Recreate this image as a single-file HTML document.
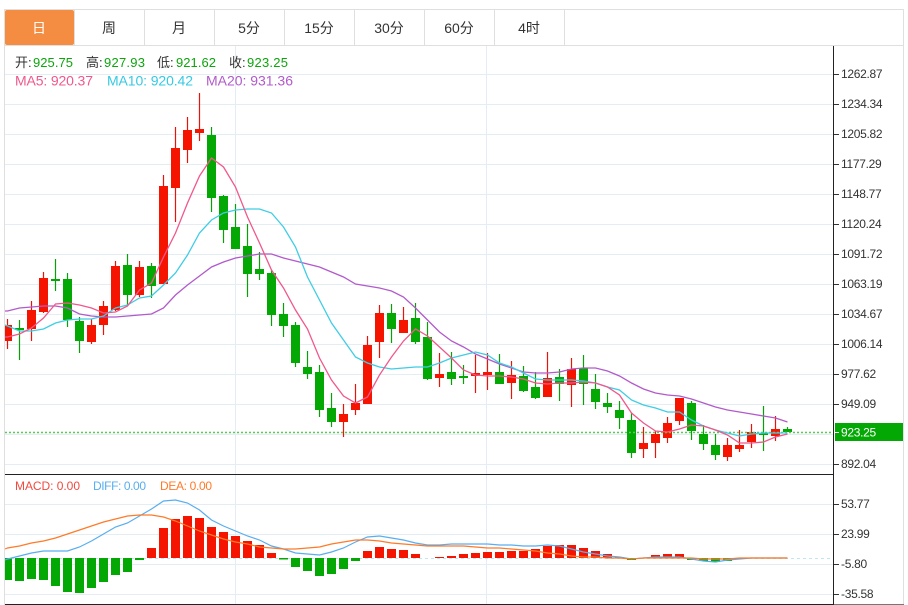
<!DOCTYPE html>
<html>
<head>
<meta charset="utf-8">
<style>
html,body{margin:0;padding:0;background:#fff;width:908px;height:605px;overflow:hidden}
svg{display:block;position:absolute;left:0;top:0}
text{font-family:"Liberation Sans","Noto Sans CJK SC",sans-serif}
.tab{font-size:14px;fill:#333;text-anchor:middle}
.ax{font-size:12px;fill:#333;letter-spacing:-.3px}
.i{font-size:13px}
.m{font-size:12px}
</style>
</head>
<body>
<svg width="908" height="605" viewBox="0 0 908 605" xmlns="http://www.w3.org/2000/svg">
<defs><clipPath id="c"><rect x="5" y="46" width="829" height="559"/></clipPath></defs>

<!-- frame -->
<path d="M4.500 605V9.500H903.500V605M5 45.500H904M74.500 10V45M144.500 10V45M214.500 10V45M284.500 10V45M354.500 10V45M424.500 10V45M494.500 10V45M564.500 10V45" fill="none" stroke="#dfdfdf"/>
<rect x="5" y="10" width="69" height="35" rx="2" fill="#f48d42"/>

<!-- tabs -->
<text class="tab" x="39" y="33" style="fill:#fff">日</text>
<text class="tab" x="109" y="33">周</text>
<text class="tab" x="179" y="33">月</text>
<text class="tab" x="249" y="33">5分</text>
<text class="tab" x="319" y="33">15分</text>
<text class="tab" x="389" y="33">30分</text>
<text class="tab" x="459" y="33">60分</text>
<text class="tab" x="529" y="33">4时</text>

<!-- grid -->
<path d="M5 74.500H834M5 104.500H834M5 134.500H834M5 164.500H834M5 194.500H834M5 224.500H834M5 254.500H834M5 284.500H834M5 314.500H834M5 344.500H834M5 374.500H834M5 404.500H834M5 434.500H834M5 464.500H834M5 504.500H834M5 534.500H834M5 564.500H834M5 594.500H834M235.500 46V604M486.500 46V604" fill="none" stroke="#e4edf4"/>

<g clip-path="url(#c)">
<!-- green wicks -->
<path d="M19.500 320V360M55.500 259V291M67.500 273V327M79.500 317V353M127.500 254V305M151.500 263V298M211.500 127V212M223.500 195V243M235.500 204V249M247.500 224V297M259.500 252V280M271.500 270V326M283.500 303V337M295.500 322V367M307.500 351V379M319.500 365V417M331.500 393V427M391.500 304V343M415.500 303V344M427.500 322V380M451.500 352V385M463.500 365V384M499.500 354V384M523.500 366V392M535.500 372V399M559.500 369V401M583.500 355V405M595.500 374V409M607.500 393V413M619.500 401V429M631.500 413V458M691.500 401V440M703.500 425V450M715.500 434V460M763.500 406V451M787.500 427V432" stroke="#0a9f0a" stroke-width="1.200" fill="none"/>
<!-- red wicks -->
<path d="M7.500 319V349M31.500 301V341M43.500 272V313M91.500 319V344M103.500 301V335M115.500 261V311M139.500 261V297M163.500 175V284M175.500 127V222M187.500 117V163M199.500 93V141M343.500 404V437M355.500 384V415M367.500 336V404M379.500 305V358M403.500 307V333M439.500 353V387M475.500 355V393M487.500 353V390M511.500 361V399M547.500 352V397M571.500 358V407M643.500 427V458M655.500 431V458M667.500 417V443M679.500 398V425M727.500 438V461M739.500 430V452M751.500 424V448M775.500 416V441" stroke="#e8140a" stroke-width="1.200" fill="none"/>
<!-- green bodies -->
<path fill="#04a804" d="M15 328h9V330h-9zM51 279h9V281h-9zM63 279h9V320h-9zM75 321h9V341h-9zM123 265h9V295h-9zM147 266h9V286h-9zM207 135h9V198h-9zM219 196h9V230h-9zM231 227h9V249h-9zM243 246h9V274h-9zM255 269h9V274h-9zM267 273h9V315h-9zM279 314h9V326h-9zM291 325h9V363h-9zM303 367h9V374h-9zM315 372h9V410h-9zM327 408h9V422h-9zM387 313h9V329h-9zM411 318h9V342h-9zM423 337h9V379h-9zM447 372h9V379h-9zM459 376h9V378h-9zM495 372h9V384h-9zM519 376h9V391h-9zM531 387h9V398h-9zM555 377h9V384h-9zM579 368h9V384h-9zM591 389h9V402h-9zM603 403h9V407h-9zM615 410h9V418h-9zM627 420h9V453h-9zM687 403h9V431h-9zM699 434h9V444h-9zM711 445h9V455h-9zM759 433h9V435h-9zM783 429h9V432h-9z"/>
<!-- red bodies -->
<path fill="#f41400" d="M3 325h9V341h-9zM27 310h9V329h-9zM39 278h9V312h-9zM87 325h9V342h-9zM99 306h9V325h-9zM111 266h9V310h-9zM135 267h9V295h-9zM159 186h9V284h-9zM171 148h9V188h-9zM183 130h9V150h-9zM195 129h9V133h-9zM339 414h9V422h-9zM351 403h9V410h-9zM363 345h9V404h-9zM375 313h9V342h-9zM399 320h9V333h-9zM435 374h9V378h-9zM471 373h9V376h-9zM483 372h9V375h-9zM507 375h9V383h-9zM543 378h9V397h-9zM567 369h9V385h-9zM639 443h9V449h-9zM651 434h9V443h-9zM663 423h9V438h-9zM675 398h9V421h-9zM723 445h9V457h-9zM735 445h9V449h-9zM747 432h9V442h-9zM771 429h9V436h-9z"/>

<!-- last price dotted -->
<path d="M5 432.500H834" stroke="#55cc55" stroke-width="1.400" stroke-dasharray="2 2" fill="none"/>

<!-- MA20 -->
<path fill="none" stroke="#b25acb" stroke-width="1.300" d="M5 311L7.500 311 19.500 308 31.500 307 43.500 306 55.500 306 67.500 308 79.500 314 91.500 316 103.500 317 115.500 317 127.500 316 139.500 315 151.500 314 163.500 308 175.500 295 187.500 285 199.500 276 211.500 267 223.500 262 235.500 258 247.500 256 259.500 254 271.500 254 283.500 258 295.500 261 307.500 264 319.500 267 331.500 272 343.500 277 355.500 284 367.500 286 379.500 288 391.500 291 403.500 297 415.500 308 427.500 320 439.500 332 451.500 341 463.500 347 475.500 354 487.500 359 499.500 364 511.500 368 523.500 372 535.500 373 547.500 373 559.500 372 571.500 369 583.500 368 595.500 368 607.500 371 619.500 376 631.500 383 643.500 389 655.500 393 667.500 395 679.500 396 691.500 399 703.500 403 715.500 407 727.500 410 739.500 412 751.500 414 763.500 416 775.500 418 787.500 422"/>
<!-- MA10 -->
<path fill="none" stroke="#3fcde4" stroke-width="1.300" d="M5 325L7.500 326 19.500 331 31.500 331 43.500 329 55.500 323 67.500 320 79.500 319 91.500 319 103.500 316 115.500 308 127.500 305 139.500 298 151.500 296 163.500 285 175.500 273 187.500 255 199.500 233 211.500 220 223.500 213 235.500 210 247.500 209 259.500 209 271.500 213 283.500 227 295.500 247 307.500 277 319.500 300 331.500 323 343.500 340 355.500 357 367.500 363 379.500 367 391.500 369 403.500 368 415.500 367 427.500 367 439.500 363 451.500 358 463.500 355 475.500 352 487.500 355 499.500 363 511.500 367 523.500 373 535.500 379 547.500 380 559.500 380 571.500 380 583.500 381 595.500 383 607.500 387 619.500 390 631.500 400 643.500 405 655.500 408 667.500 412 679.500 412 691.500 420 703.500 426 715.500 430 727.500 433 739.500 436 751.500 434 763.500 433 775.500 433 787.500 433"/>
<!-- MA5 -->
<path fill="none" stroke="#f0588c" stroke-width="1.300" d="M5 337L7.500 337 19.500 334 31.500 328 43.500 318 55.500 304 67.500 303 79.500 305 91.500 308 103.500 313 115.500 312 127.500 306 139.500 290 151.500 283 163.500 257 175.500 233 187.500 203 199.500 176 211.500 158 223.500 167 235.500 187 247.500 217 259.500 243 271.500 270 283.500 288 295.500 310 307.500 329 319.500 358 331.500 380 343.500 396 355.500 403 367.500 397 379.500 375 391.500 357 403.500 341 415.500 329 427.500 336 439.500 347 451.500 358 463.500 370 475.500 375 487.500 376 499.500 376 511.500 377 523.500 379 535.500 383 547.500 384 559.500 383 571.500 383 583.500 382 595.500 383 607.500 387 619.500 395 631.500 413 643.500 423 655.500 431 667.500 432 679.500 429 691.500 425 703.500 426 715.500 430 727.500 435 739.500 443 751.500 443 763.500 442 775.500 437 787.500 434"/>

<!-- MACD zero -->
<path d="M5 558.500H834" stroke="#bfe6f2" stroke-dasharray="3 3" fill="none"/>
<!-- MACD green -->
<path fill="#04a804" d="M3 558h9V580h-9zM15 558h9V581h-9zM27 558h9V579h-9zM39 558h9V580h-9zM51 558h9V586h-9zM63 558h9V592h-9zM75 558h9V593h-9zM87 558h9V588h-9zM99 558h9V582h-9zM111 558h9V575h-9zM123 558h9V572h-9zM135 558h9V560h-9zM279 558h9V559.500h-9zM291 558h9V567h-9zM303 558h9V571h-9zM315 558h9V576h-9zM327 558h9V574h-9zM339 558h9V569h-9zM351 558h9V561h-9zM627 558h9V560h-9zM687 558h9V560h-9zM699 558h9V561h-9zM711 558h9V562h-9zM723 558h9V561h-9zM735 558h9V559h-9z"/>
<!-- MACD red -->
<path fill="#f41400" d="M147 548h9V558h-9zM159 528h9V558h-9zM171 519h9V558h-9zM183 516h9V558h-9zM195 518h9V558h-9zM207 527h9V558h-9zM219 532h9V558h-9zM231 536h9V558h-9zM243 541h9V558h-9zM255 545h9V558h-9zM267 553h9V558h-9zM363 551h9V558h-9zM375 547h9V558h-9zM387 549h9V558h-9zM399 550h9V558h-9zM411 554h9V558h-9zM435 557h9V558h-9zM447 556h9V558h-9zM459 554h9V558h-9zM471 553h9V558h-9zM483 552h9V558h-9zM495 552h9V558h-9zM507 551h9V558h-9zM519 551h9V558h-9zM531 549h9V558h-9zM543 546h9V558h-9zM555 545h9V558h-9zM567 545h9V558h-9zM579 548h9V558h-9zM591 551h9V558h-9zM603 554h9V558h-9zM615 557h9V558h-9zM651 555h9V558h-9zM663 554h9V558h-9zM675 554h9V558h-9z"/>
<!-- DIFF -->
<path fill="none" stroke="#58aef0" stroke-width="1.200" d="M5 560L7.500 559 19.500 556 31.500 553 43.500 551 55.500 551 67.500 551 79.500 547 91.500 541 103.500 534 115.500 527 127.500 523 139.500 516 151.500 509 163.500 501 175.500 500 187.500 503 199.500 510 211.500 520 223.500 526 235.500 531 247.500 536 259.500 540 271.500 546 283.500 549 295.500 553 307.500 554 319.500 555 331.500 552 343.500 548 355.500 542 367.500 537 379.500 536 391.500 538 403.500 540 415.500 543 427.500 545 439.500 545 451.500 544 463.500 544 475.500 544 487.500 544 499.500 545 511.500 545 523.500 546 535.500 546 547.500 545 559.500 546 571.500 549 583.500 552 595.500 554 607.500 556 619.500 557 631.500 559 643.500 558 655.500 557 667.500 557 679.500 557 691.500 559 703.500 561 715.500 562 727.500 560 739.500 559 751.500 558 763.500 558 775.500 558 787.500 558"/>
<!-- DEA -->
<path fill="none" stroke="#ff7a28" stroke-width="1.200" d="M5 549L7.500 548 19.500 546 31.500 543 43.500 541 55.500 538 67.500 534 79.500 530 91.500 526 103.500 522 115.500 519 127.500 516 139.500 515 151.500 515 163.500 517 175.500 521 187.500 526 199.500 531 211.500 535 223.500 539 235.500 542 247.500 544 259.500 547 271.500 548 283.500 549 295.500 549 307.500 548 319.500 547 331.500 544 343.500 542 355.500 540 367.500 540 379.500 541 391.500 543 403.500 544 415.500 545 427.500 546 439.500 546 451.500 546 463.500 546 475.500 547 487.500 548 499.500 548 511.500 549 523.500 550 535.500 551 547.500 553 559.500 554 571.500 556 583.500 557 595.500 557 607.500 558 619.500 558 631.500 559 643.500 558 655.500 558 667.500 558 679.500 558 691.500 558 703.500 559 715.500 559 727.500 559 739.500 558 751.500 558 763.500 558 775.500 558 787.500 558"/>
</g>

<!-- axes -->
<path d="M833.500 46V605M5 474.500H834M5 604.500H834" stroke="#222" fill="none"/>
<path d="M834 604.500H904" stroke="#777" fill="none"/>
<path d="M834 74.500h5M834 104.500h5M834 134.500h5M834 164.500h5M834 194.500h5M834 224.500h5M834 254.500h5M834 284.500h5M834 314.500h5M834 344.500h5M834 374.500h5M834 404.500h5M834 464.500h5M834 504.500h5M834 534.500h5M834 564.500h5M834 594.500h5" stroke="#333" fill="none"/>
<rect x="835" y="423" width="68" height="18" fill="#04a804"/>
<path d="M835 432.500h4" stroke="#fff"/>

<text class="ax" x="841" y="78">1262.87</text>
<text class="ax" x="841" y="108">1234.34</text>
<text class="ax" x="841" y="138">1205.82</text>
<text class="ax" x="841" y="168">1177.29</text>
<text class="ax" x="841" y="198">1148.77</text>
<text class="ax" x="841" y="228">1120.24</text>
<text class="ax" x="841" y="258">1091.72</text>
<text class="ax" x="841" y="288">1063.19</text>
<text class="ax" x="841" y="318">1034.67</text>
<text class="ax" x="841" y="348">1006.14</text>
<text class="ax" x="841" y="378">977.62</text>
<text class="ax" x="841" y="408">949.09</text>
<text class="ax" x="841" y="436.500" style="fill:#fff">923.25</text>
<text class="ax" x="841" y="468">892.04</text>
<text class="ax" x="841" y="508">53.77</text>
<text class="ax" x="841" y="538">23.99</text>
<text class="ax" x="841" y="568">-5.80</text>
<text class="ax" x="841" y="598">-35.58</text>

<!-- info -->
<g class="i">
<text x="15" y="67" fill="#333">开:</text><text x="33" y="67" fill="#0ca50c" textLength="40">925.75</text>
<text x="86" y="67" fill="#333">高:</text><text x="104" y="67" fill="#0ca50c" textLength="41">927.93</text>
<text x="157" y="67" fill="#333">低:</text><text x="176" y="67" fill="#0ca50c" textLength="40">921.62</text>
<text x="229" y="67" fill="#333">收:</text><text x="247" y="67" fill="#0ca50c" textLength="41">923.25</text>
<text x="15" y="85.500" fill="#f0588c" font-size="14" style="font-size:14px" textLength="78">MA5: 920.37</text>
<text x="107" y="85.500" fill="#35c9e2" style="font-size:14px" textLength="86">MA10: 920.42</text>
<text x="206" y="85.500" fill="#b25acb" style="font-size:14px" textLength="87">MA20: 931.36</text>
</g>
<g class="m">
<text x="15" y="490" fill="#f04a40" textLength="65">MACD: 0.00</text>
<text x="93" y="490" fill="#58aef0" textLength="53">DIFF: 0.00</text>
<text x="160" y="490" fill="#ff7a28" textLength="52">DEA: 0.00</text>
</g>
</svg>
</body>
</html>
